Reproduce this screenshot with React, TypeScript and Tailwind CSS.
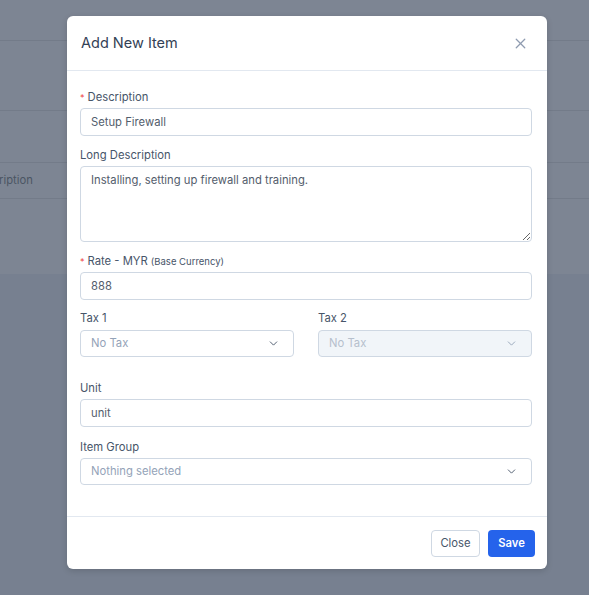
import React from 'react';
import { ChevronDown, X } from 'lucide-react';

const inputClass =
  'block w-full h-[28px] rounded-[4px] border border-[#cfd8e3] bg-white px-[10px] text-[11.25px] text-[#535d6c] outline-none';

function Label({ children, required }: { children: React.ReactNode; required?: boolean }) {
  return (
    <label className="mb-[3px] block h-[16px] text-[11.25px] leading-[16px] text-[#475569]">
      {required && <span className="mr-[3px] text-[9px] text-[#ef4444]">*</span>}
      {children}
    </label>
  );
}

function Select({ value, disabled }: { value: string; disabled?: boolean }) {
  return (
    <div
      className={`flex h-[27px] items-center justify-between rounded-[4px] border border-[#cfd8e3] pl-[10px] pr-[13px] text-[11.25px] ${
        disabled ? 'bg-[#f1f5f9] text-[#b6c0cd]' : 'bg-white text-[#94a3b8]'
      }`}
    >
      <span>{value}</span>
      <ChevronDown
        size={13}
        strokeWidth={1.7}
        className={disabled ? 'text-[#94a3b8]' : 'text-[#475569]'}
      />
    </div>
  );
}

export default function App() {
  return (
    <div className="relative h-[595px] w-[589px] overflow-hidden bg-[#778090] font-['Inter',sans-serif]">
      {/* page behind the overlay */}
      <div className="bg-[#7d8593]">
        <div className="h-[41px] border-b border-[#737b89]" />
        <div className="h-[70px] border-b border-[#737b89]" />
        <div className="h-[52px] border-b border-[#737b89]" />
        <div className="flex h-[36px] items-center overflow-hidden border-b border-[#737b89]">
          <span className="ml-[-28px] text-[11.25px] text-[#4b5563]">Description</span>
        </div>
        <div className="h-[75px]" />
      </div>

      {/* modal */}
      <div className="absolute left-[67px] top-[16px] w-[480px] rounded-[6px] bg-white shadow-[0_2px_6px_rgba(0,0,0,0.15)]">
        <div className="flex h-[55px] items-center justify-between border-b border-[#e2e8f0] pl-[14px] pr-[18px]">
          <h2 className="text-[14.5px] font-normal text-[#334155]">Add New Item</h2>
          <X size={17} strokeWidth={1.8} className="text-[#8e9bb0]" />
        </div>

        <div className="pb-[31px] pl-[13px] pr-[15px] pt-[18px]">
          <div>
            <Label required>Description</Label>
            <input className={inputClass} defaultValue="Setup Firewall" />
          </div>

          <div className="mt-[11px]">
            <Label>Long Description</Label>
            <textarea
              className="block h-[76px] w-full rounded-[4px] border border-[#cfd8e3] bg-white px-[10px] py-[5px] text-[11.25px] text-[#535d6c] outline-none"
              defaultValue="Installing, setting up firewall and training."
            />
          </div>

          <div className="mt-[11px]">
            <Label required>
              Rate - MYR <span className="text-[9.5px]">(Base Currency)</span>
            </Label>
            <input className={inputClass} defaultValue="888" />
          </div>

          <div className="mb-[23px] mt-[10px] grid grid-cols-2 gap-[24px]">
            <div>
              <label className="mb-[4px] block h-[16px] text-[11.25px] leading-[16px] text-[#475569]">Tax 1</label>
              <Select value="No Tax" />
            </div>
            <div>
              <label className="mb-[4px] block h-[16px] text-[11.25px] leading-[16px] text-[#475569]">Tax 2</label>
              <Select value="No Tax" disabled />
            </div>
          </div>

          <div>
            <Label>Unit</Label>
            <input className={inputClass} defaultValue="unit" />
          </div>

          <div className="mt-[12px]">
            <Label>Item Group</Label>
            <Select value="Nothing selected" />
          </div>
        </div>

        <div className="flex h-[53px] items-center justify-end gap-[8px] border-t border-[#e2e8f0] pr-[12px]">
          <button className="h-[27px] w-[49px] rounded-[4px] border border-[#cfd8e3] bg-white text-[11.25px] text-[#475569]">
            Close
          </button>
          <button className="h-[27px] w-[47px] rounded-[4px] bg-[#2563eb] text-[11.25px] font-semibold text-white">
            Save
          </button>
        </div>
      </div>
    </div>
  );
}
